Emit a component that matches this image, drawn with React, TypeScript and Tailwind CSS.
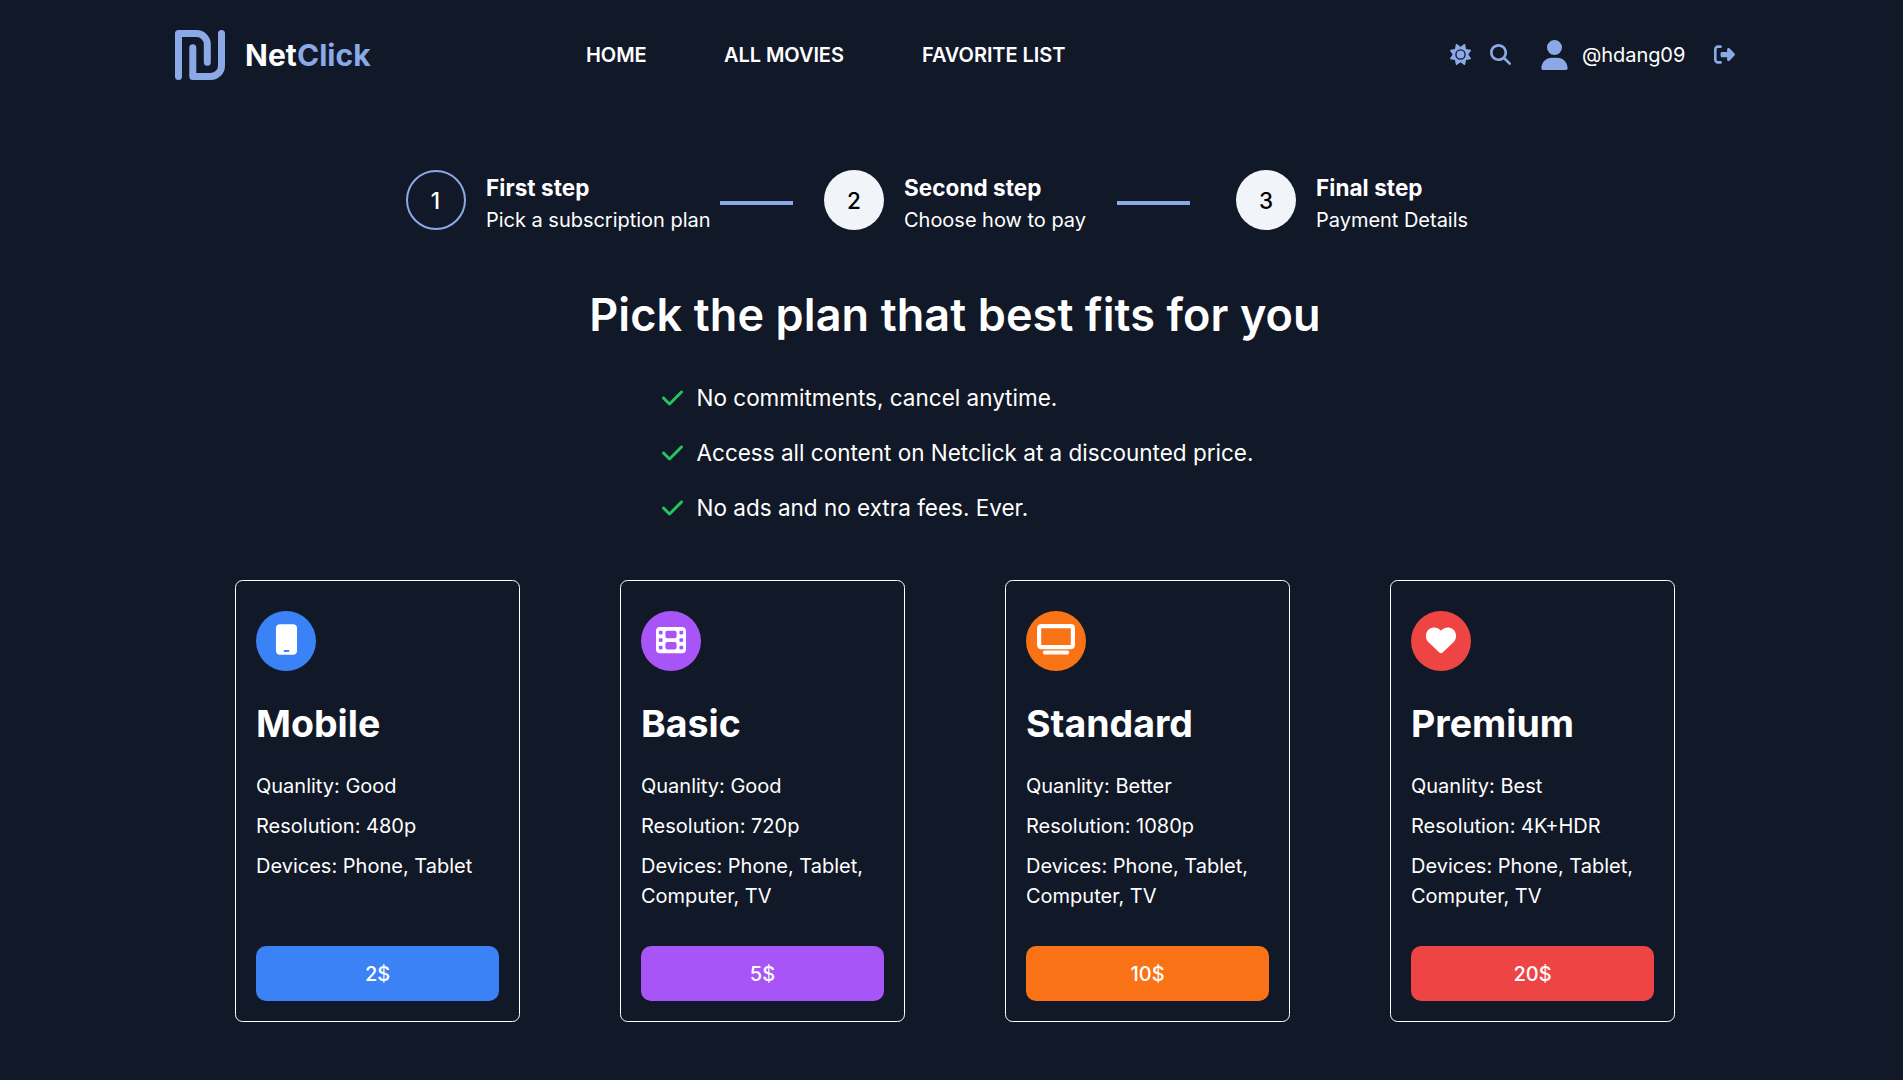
import {
  FaCheck,
  FaFilm,
  FaHeart,
  FaMagnifyingGlass,
  FaMobile,
  FaRightFromBracket,
  FaSun,
  FaUser,
} from "react-icons/fa6";

function TvIcon() {
  return (
    <svg viewBox="0 0 38 31" className="h-[31px] w-[38px]" fill="none" stroke="currentColor">
      <rect x="2.1" y="2.1" width="33.8" height="21" rx="2" strokeWidth="4.2" />
      <path d="M7.8 28.6H30.2" strokeWidth="4" strokeLinecap="round" />
    </svg>
  );
}

const plans = [
  {
    name: "Mobile",
    quality: "Good",
    resolution: "480p",
    devices: "Phone, Tablet",
    price: "2$",
    color: "bg-[#3b82f6]",
    icon: <FaMobile className="h-[31px] w-[23px]" />,
  },
  {
    name: "Basic",
    quality: "Good",
    resolution: "720p",
    devices: "Phone, Tablet, Computer, TV",
    price: "5$",
    color: "bg-[#a855f7]",
    icon: <FaFilm className="size-[30px]" />,
  },
  {
    name: "Standard",
    quality: "Better",
    resolution: "1080p",
    devices: "Phone, Tablet, Computer, TV",
    price: "10$",
    color: "bg-[#f97316]",
    icon: <TvIcon />,
  },
  {
    name: "Premium",
    quality: "Best",
    resolution: "4K+HDR",
    devices: "Phone, Tablet, Computer, TV",
    price: "20$",
    color: "bg-[#ef4444]",
    icon: <FaHeart className="size-[30px]" />,
  },
];

const perks = [
  "No commitments, cancel anytime.",
  "Access all content on Netclick at a discounted price.",
  "No ads and no extra fees. Ever.",
];

function Logo() {
  return (
    <svg viewBox="0 0 50 50" className="size-[50px]" fill="none" stroke="#8aa9e6" strokeWidth="7" strokeLinecap="round" strokeLinejoin="round">
      <path d="M3.5 46.5V3.5H21.5A10.8 10.8 0 0 1 32.3 14.3V32.3" />
      <path d="M17.8 17.8V46.5H35.7A10.8 10.8 0 0 0 46.5 35.7V3.5" />
    </svg>
  );
}

function Step({ n, title, text, active = false }: { n: number; title: string; text: string; active?: boolean }) {
  return (
    <div className="flex items-center gap-5">
      <div
        className={
          "flex size-[60px] items-center justify-center rounded-full pt-px text-[22.5px] leading-[30px] font-medium " +
          (active ? "border-2 border-[#8aa9e6] pr-px text-white" : "bg-[#f1f5f9] text-black")
        }
      >
        {n}
      </div>
      <div className="pt-[4px] whitespace-nowrap">
        <h3 className="text-[22.5px] leading-[35px] font-bold tracking-[0.06px]">{title}</h3>
        <p className="text-[20px] leading-[30px] tracking-[-0.02px]">{text}</p>
      </div>
    </div>
  );
}

export default function App() {
  return (
    <div className="h-[1080px] w-full overflow-hidden bg-[#111827] font-['Inter',sans-serif] text-[20px] leading-[30px] text-white">
      <header className="flex h-[110px] items-center pl-[175px]">
        <a className="flex w-[411px] items-center gap-5">
          <Logo />
          <span className="text-[30px] leading-[40px] font-bold tracking-[0.06px]">
            Net<span className="text-[#8aa9e6]">Click</span>
          </span>
        </a>
        <nav className="flex w-[864px] font-semibold tracking-[-0.06px] whitespace-nowrap">
          <a className="w-[138px]">HOME</a>
          <a className="w-[198px]">ALL MOVIES</a>
          <a>FAVORITE LIST</a>
        </nav>
        <div className="flex items-center text-[#8aa9e6]">
          <FaSun className="mr-[19px] mb-px size-[21px]" />
          <FaMagnifyingGlass className="mr-[29.5px] mb-px size-[21px]" />
          <FaUser className="mr-[14.5px] mb-px h-[30px] w-[27px]" />
          <span className="w-[132px] tracking-[-0.06px] text-white">@hdang09</span>
          <FaRightFromBracket className="mb-px size-[21px]" />
        </div>
      </header>

      <section className="flex h-[120px] items-end pl-[406px]">
        <div className="flex h-[60px] items-center">
          <div className="w-[314px]">
            <Step n={1} title="First step" text="Pick a subscription plan" active />
          </div>
          <div className="mt-[6px] mr-[31px] h-1 w-[73px] bg-[#8aa9e6]" />
          <div className="w-[293px]">
            <Step n={2} title="Second step" text="Choose how to pay" />
          </div>
          <div className="mt-[6px] mr-[46px] h-1 w-[73px] bg-[#8aa9e6]" />
          <Step n={3} title="Final step" text="Payment Details" />
        </div>
      </section>

      <h1 className="mt-[62px] ml-[7px] text-center text-[45px] leading-[45px] font-semibold tracking-[0.1px]">
        Pick the plan that best fits for you
      </h1>

      <ul className="mt-[33px] ml-[661.5px] text-[22.5px] leading-[35px]">
        {perks.map((perk) => (
          <li key={perk} className="flex h-[55px] items-center gap-[14px]">
            <FaCheck className="h-[24px] w-[21px] text-[#22c55e]" />
            <span>{perk}</span>
          </li>
        ))}
      </ul>

      <section className="mt-[45px] ml-[235px] grid grid-cols-[repeat(4,285px)] gap-[100px]">
        {plans.map((plan) => (
          <article key={plan.name} className="flex h-[442px] flex-col rounded-[7.5px] border border-white px-5 pt-[30px] pb-5">
            <div className={"flex size-[60px] items-center justify-center rounded-full pb-[3px] " + plan.color}>{plan.icon}</div>
            <h2 className="mt-[30px] mb-[25px] text-[37.5px] leading-[45px] font-bold">{plan.name}</h2>
            <div className="flex flex-col gap-[10px]">
              <p>{`Quanlity: ${plan.quality}`}</p>
              <p>{`Resolution: ${plan.resolution}`}</p>
              <p>{`Devices: ${plan.devices}`}</p>
            </div>
            <button className={"mt-auto h-[55px] w-full rounded-[10px] font-medium " + plan.color}>{plan.price}</button>
          </article>
        ))}
      </section>
    </div>
  );
}
